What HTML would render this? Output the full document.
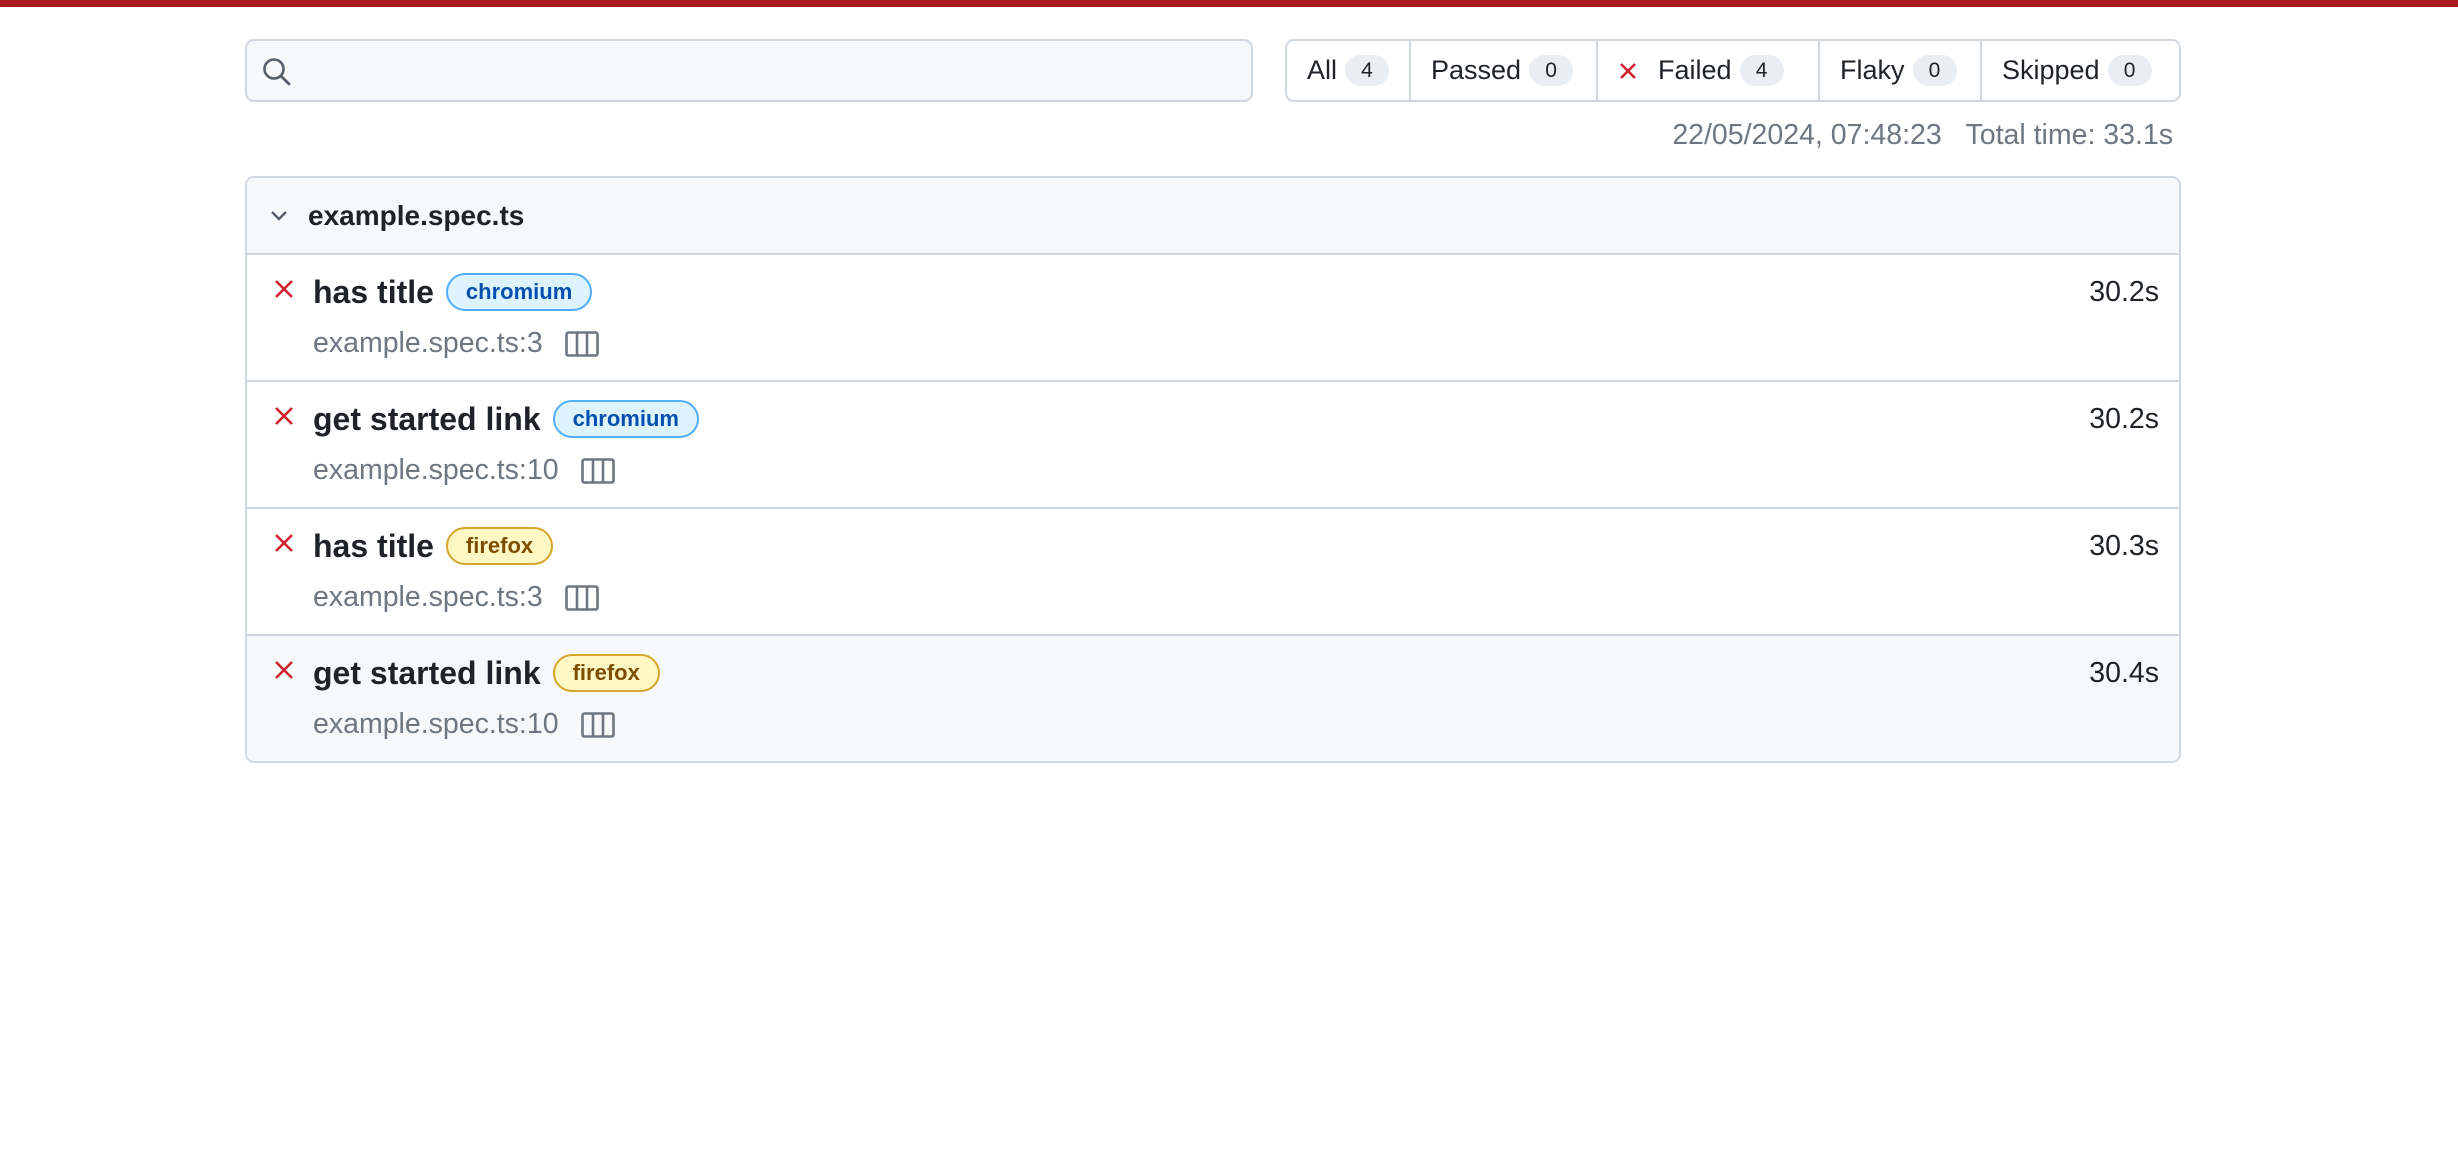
<!DOCTYPE html>
<html><head><meta charset="utf-8"><style>
*{box-sizing:border-box;margin:0;padding:0}
body{width:2458px;height:1172px;background:#fff;font-family:"Liberation Sans",sans-serif;color:#1f2328;position:relative;overflow:hidden}
.bar{position:absolute;left:0;top:0;width:2458px;height:7px;background:#ab1b1e}
.search{position:absolute;left:245px;top:39px;width:1008px;height:63px;border:2px solid #d0d7de;border-radius:9px;background:#f6f8fa}
.filters{position:absolute;left:1285px;top:39px;width:896px;height:63px;border:2px solid #d0d7de;border-radius:9px;display:flex;background:#fff}
.filters div{height:100%;display:flex;align-items:center;font-size:27px;border-right:2px solid #d0d7de;padding-left:20px}
.filters div:last-child{border-right:none}
.cnt{display:inline-block;background:#eaeef2;border-radius:18px;font-size:21px;min-width:44px;height:31px;line-height:31px;text-align:center;margin-left:8px}
.meta{position:absolute;right:285px;top:119px;font-size:28.5px;color:#6e7781}
.card{position:absolute;left:245px;top:176px;width:1936px;height:587px;border:2px solid #d0d7de;border-radius:9px;overflow:hidden}
.hdr{height:77px;background:#f6f8fa;border-bottom:2px solid #d0d7de;display:flex;align-items:center;font-weight:bold;font-size:28px;padding-left:61px;position:relative}
.row{height:127px;border-bottom:2px solid #d0d7de;position:relative}
.row:last-child{border-bottom:none;background:#f6f8fa}
.x{position:absolute;left:27px;top:24px}
.t{position:absolute;left:66px;top:12px;font-size:32px;font-weight:bold;display:flex;align-items:center;height:50px}
.b{display:inline-block;height:38px;line-height:34px;border-radius:19px;font-size:22px;font-weight:bold;padding:0 18px;margin-left:12px}
.chr{background:#ddf4ff;border:2px solid #54aeff;color:#0550ae}
.ff{background:#fff8c5;border:2px solid #d4a72c;color:#7d4e00}
.loc{position:absolute;left:66px;top:72px;font-size:28.5px;color:#6e7781;display:flex;align-items:center}
.loc svg{margin-left:22px}
.d{position:absolute;right:20px;top:21px;font-size:28.5px}
</style></head><body>
<div class="bar"></div>
<div class="search"><svg style="position:absolute;left:14px;top:15px" width="32" height="32" viewBox="0 0 32 32"><circle cx="13" cy="13" r="9.5" fill="none" stroke="#57606a" stroke-width="2.6"/><line x1="20" y1="20" x2="28" y2="28" stroke="#57606a" stroke-width="2.8" stroke-linecap="round"/></svg></div>
<div class="filters">
<div style="width:124px">All<span class="cnt">4</span></div>
<div style="width:187px">Passed<span class="cnt">0</span></div>
<div style="width:222px"><svg width="20" height="20" viewBox="0 0 20 20" style="margin-right:20px"><path d="M3 3L17 17M17 3L3 17" stroke="#cf222e" stroke-width="2.6"/></svg>Failed<span class="cnt">4</span></div>
<div style="width:162px">Flaky<span class="cnt">0</span></div>
<div style="flex:1">Skipped<span class="cnt">0</span></div>
</div>
<div class="meta">22/05/2024, 07:48:23&nbsp;&nbsp;&nbsp;Total time: 33.1s</div>
<div class="card">
<div class="hdr"><svg style="position:absolute;left:22px;top:31px" width="20" height="14" viewBox="0 0 20 14"><path d="M3 3L10 10L17 3" fill="none" stroke="#57606a" stroke-width="2.4"/></svg>example.spec.ts</div>
<div class="row"><svg class="x" width="20" height="20" viewBox="0 0 20 20"><path d="M2 2L18 18M18 2L2 18" stroke="#cf222e" stroke-width="2.6"/></svg><div class="t">has title<span class="b chr">chromium</span></div><div class="loc">example.spec.ts:3<svg width="34" height="26" viewBox="0 0 34 26"><rect x="1.5" y="1.5" width="31" height="23" rx="2" fill="none" stroke="#6e7781" stroke-width="2.6"/><line x1="12" y1="1" x2="12" y2="25" stroke="#6e7781" stroke-width="2.6"/><line x1="22" y1="1" x2="22" y2="25" stroke="#6e7781" stroke-width="2.6"/></svg></div><div class="d">30.2s</div></div>
<div class="row"><svg class="x" width="20" height="20" viewBox="0 0 20 20"><path d="M2 2L18 18M18 2L2 18" stroke="#cf222e" stroke-width="2.6"/></svg><div class="t">get started link<span class="b chr">chromium</span></div><div class="loc">example.spec.ts:10<svg width="34" height="26" viewBox="0 0 34 26"><rect x="1.5" y="1.5" width="31" height="23" rx="2" fill="none" stroke="#6e7781" stroke-width="2.6"/><line x1="12" y1="1" x2="12" y2="25" stroke="#6e7781" stroke-width="2.6"/><line x1="22" y1="1" x2="22" y2="25" stroke="#6e7781" stroke-width="2.6"/></svg></div><div class="d">30.2s</div></div>
<div class="row"><svg class="x" width="20" height="20" viewBox="0 0 20 20"><path d="M2 2L18 18M18 2L2 18" stroke="#cf222e" stroke-width="2.6"/></svg><div class="t">has title<span class="b ff">firefox</span></div><div class="loc">example.spec.ts:3<svg width="34" height="26" viewBox="0 0 34 26"><rect x="1.5" y="1.5" width="31" height="23" rx="2" fill="none" stroke="#6e7781" stroke-width="2.6"/><line x1="12" y1="1" x2="12" y2="25" stroke="#6e7781" stroke-width="2.6"/><line x1="22" y1="1" x2="22" y2="25" stroke="#6e7781" stroke-width="2.6"/></svg></div><div class="d">30.3s</div></div>
<div class="row"><svg class="x" width="20" height="20" viewBox="0 0 20 20"><path d="M2 2L18 18M18 2L2 18" stroke="#cf222e" stroke-width="2.6"/></svg><div class="t">get started link<span class="b ff">firefox</span></div><div class="loc">example.spec.ts:10<svg width="34" height="26" viewBox="0 0 34 26"><rect x="1.5" y="1.5" width="31" height="23" rx="2" fill="none" stroke="#6e7781" stroke-width="2.6"/><line x1="12" y1="1" x2="12" y2="25" stroke="#6e7781" stroke-width="2.6"/><line x1="22" y1="1" x2="22" y2="25" stroke="#6e7781" stroke-width="2.6"/></svg></div><div class="d">30.4s</div></div>
</div>
</body></html>
